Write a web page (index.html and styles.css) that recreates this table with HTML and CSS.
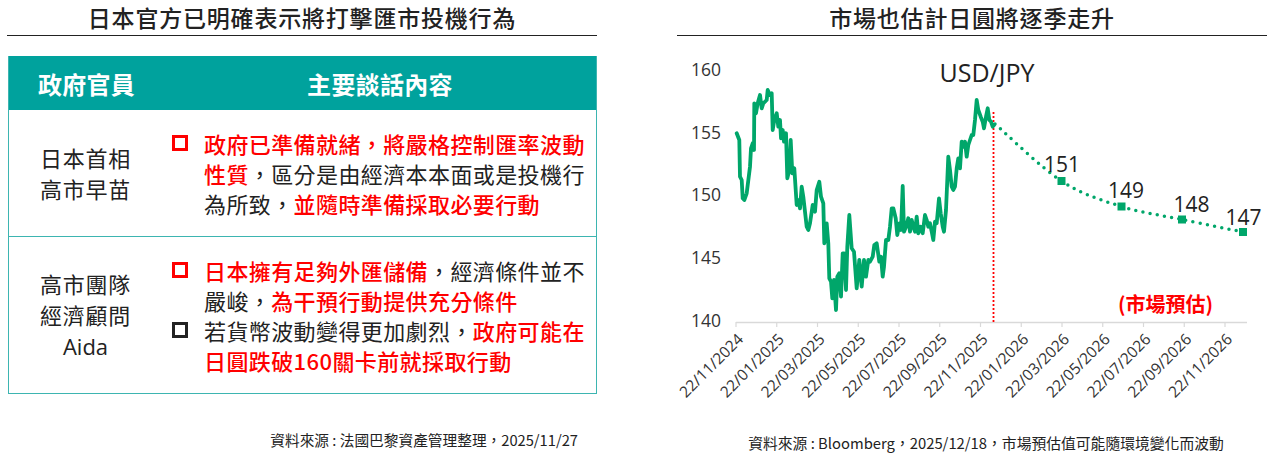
FILE: index.html
```html
<!DOCTYPE html>
<html lang="zh-Hant">
<head>
<meta charset="utf-8">
<title>日圓匯市</title>
<link rel="stylesheet" href="styles.css">
</head>
<body>
<div class="page">
  <section class="panel left">
    <h2 class="title">日本官方已明確表示將打擊匯市投機行為</h2>
    <div class="table">
      <div class="thead">
        <div class="th">政府官員</div>
        <div class="th">主要談話內容</div>
      </div>
      <div class="row">
        <div class="who">日本首相<br>高市早苗</div>
        <div class="points">
          <div class="pt"><span class="box red"></span><p><span class="hl">政府已準備就緒，將嚴格控制匯率波動<br>性質</span>，區分是由經濟本本面或是投機行<br>為所致，<span class="hl">並隨時準備採取必要行動</span></p></div>
        </div>
      </div>
      <div class="row">
        <div class="who">高市團隊<br>經濟顧問<br><span class="latin">Aida</span></div>
        <div class="points">
          <div class="pt"><span class="box red"></span><p><span class="hl">日本擁有足夠外匯儲備</span>，經濟條件並不<br>嚴峻，<span class="hl">為干預行動提供充分條件</span></p></div>
          <div class="pt"><span class="box"></span><p>若貨幣波動變得更加劇烈，<span class="hl">政府可能在<br>日圓跌破160關卡前就採取行動</span></p></div>
        </div>
      </div>
    </div>
    <p class="source src-left">資料來源 : 法國巴黎資產管理整理，2025/11/27</p>
  </section>

  <section class="panel right">
    <h2 class="title">市場也估計日圓將逐季走升</h2>
    <svg class="chart" width="590" height="390" viewBox="677 36 590 390" xmlns="http://www.w3.org/2000/svg">
      <g class="ylab">
        <text x="721" y="69">160</text>
        <text x="721" y="131.5">155</text>
        <text x="721" y="194">150</text>
        <text x="721" y="257">145</text>
        <text x="721" y="320">140</text>
      </g>
      <line x1="736" y1="322.5" x2="1247" y2="322.5" class="axis"/>
      <g class="ticks">
        <line x1="736" y1="322" x2="736" y2="327"/>
        <line x1="776.75" y1="322" x2="776.75" y2="327"/>
        <line x1="817.5" y1="322" x2="817.5" y2="327"/>
        <line x1="858.25" y1="322" x2="858.25" y2="327"/>
        <line x1="899" y1="322" x2="899" y2="327"/>
        <line x1="939.75" y1="322" x2="939.75" y2="327"/>
        <line x1="980.5" y1="322" x2="980.5" y2="327"/>
        <line x1="1021.25" y1="322" x2="1021.25" y2="327"/>
        <line x1="1062" y1="322" x2="1062" y2="327"/>
        <line x1="1102.75" y1="322" x2="1102.75" y2="327"/>
        <line x1="1143.5" y1="322" x2="1143.5" y2="327"/>
        <line x1="1184.25" y1="322" x2="1184.25" y2="327"/>
        <line x1="1225" y1="322" x2="1225" y2="327"/>
      </g>
      <g class="xlab">
        <text transform="translate(740 336) rotate(-45)">22/11/2024</text>
        <text transform="translate(780.75 336) rotate(-45)">22/01/2025</text>
        <text transform="translate(821.5 336) rotate(-45)">22/03/2025</text>
        <text transform="translate(862.25 336) rotate(-45)">22/05/2025</text>
        <text transform="translate(903 336) rotate(-45)">22/07/2025</text>
        <text transform="translate(943.75 336) rotate(-45)">22/09/2025</text>
        <text transform="translate(984.5 336) rotate(-45)">22/11/2025</text>
        <text transform="translate(1025.25 336) rotate(-45)">22/01/2026</text>
        <text transform="translate(1066 336) rotate(-45)">22/03/2026</text>
        <text transform="translate(1106.75 336) rotate(-45)">22/05/2026</text>
        <text transform="translate(1147.5 336) rotate(-45)">22/07/2026</text>
        <text transform="translate(1188.25 336) rotate(-45)">22/09/2026</text>
        <text transform="translate(1229 336) rotate(-45)">22/11/2026</text>
      </g>
      <text x="987" y="72" class="series">USD/JPY</text>
      <line x1="993.5" y1="112" x2="993.5" y2="322" class="now"/>
      <polyline class="hist" points="736.7,133.3 739.3,140 740,176.7 741.7,180 742.7,198.3 744.3,200 746.7,193.3 750,166.7 751,148.3 752.7,143.3 754,150 754.3,103.3 756,113.3 757.7,103.3 760,95 761.7,108.3 763.3,103.3 766.7,100 767.7,90 770,95 771.7,93.3 772.7,130 774.3,120 776.7,113.3 778.3,126.7 780,120 781,138.3 782.7,130 784,141.7 786,133.3 787.3,178.3 789.3,170 790.7,140 792.3,173.3 794.3,168.3 796.7,205 798.3,200 800,208.3 801.7,186.7 803.3,196.7 806.7,226.7 808.3,230 810,223.3 812.7,205 815,211.7 816.7,190 819.3,181.7 821,196.7 823.3,203.3 824.3,243.3 826.7,223.3 828.3,243.3 829.3,278.3 831,281.7 832.3,298.3 834,280 836,310 837.3,276.7 839.3,273.3 841,296.7 842.7,253.3 844.3,253.3 846,290 847.3,246.7 849.3,215 851.7,248.3 854,251.7 856.7,288.3 859.3,260 861.7,286.7 864,260 866,276.7 868.3,260 870,261.7 872.7,256.7 874.3,245 876.7,243.3 879.3,261.7 881,256.7 882.7,276.7 884,266.7 886,240 888.3,240 890,226.7 891.7,208.3 893.3,208.3 895.7,218.3 897.3,235 899.3,223.3 901,230 902.7,186 904,231.7 906.7,225 908.3,218.3 910,231.7 911.7,220 913.3,226.7 915,231.7 916.7,216.7 918.3,233.3 920.7,226.7 922.7,233.3 925,215 926.7,220 928.3,226.7 930,223.3 931.7,231.7 933.3,240 935,221.7 936.7,223.3 939,198.3 940.7,213.3 942.7,226.7 944,231.7 946,210 948.3,156.7 950,170 951.7,186.7 953.3,190 955,186.7 956.7,168.3 958.3,158.3 960,168.3 961.7,141.7 963.3,146.7 965,141.7 966.7,156.7 968.3,145 970,140 971.7,135 973.3,135 975,120 976.7,100 978.3,110 980.7,116.7 982.7,121.7 984,128.3 986,116.7 987.7,108.3 989.3,120 991,121.7 992.7,126.7 994,125"/>
      <path class="fcst" d="M995,124 C1006.1,133.5 1040.4,167.25 1061.5,181 C1082.6,194.75 1101.4,200.1 1121.5,206.5 C1141.6,212.9 1161.75,215.25 1182,219.5 C1202.25,223.75 1232.8,229.9 1243,232"/>
      <g class="mk">
        <rect x="1057.5" y="177" width="8" height="8"/>
        <rect x="1117.5" y="202.5" width="8" height="8"/>
        <rect x="1178" y="215.5" width="8" height="8"/>
        <rect x="1239" y="228" width="8" height="8"/>
      </g>
      <g class="vlab">
        <text x="1062" y="164">151</text>
        <text x="1126" y="189.5">149</text>
        <text x="1191.5" y="203.5">148</text>
        <text x="1243.5" y="216.5">147</text>
      </g>
      <text x="1165.5" y="303" class="est">(市場預估)</text>
    </svg>
    <p class="source src-right">資料來源 : Bloomberg，2025/12/18，市場預估值可能隨環境變化而波動</p>
  </section>
</div>
</body>
</html>
```

FILE: styles.css
```css
* { box-sizing: border-box; }

html, body {
  margin: 0;
  padding: 0;
  background: #ffffff;
}

body {
  font-family: "Open Sans", "Noto Sans CJK TC", sans-serif;
  color: #222222;
  width: 1275px;
  height: 456px;
  overflow: hidden;
}

.page {
  display: flex;
  gap: 80px;
  padding-left: 7px;
}

.panel {
  width: 590px;
  display: flex;
  flex-direction: column;
}

.title {
  margin: 0;
  height: 35.5px;
  line-height: 34px;
  font-size: 23px;
  font-weight: 500;
  letter-spacing: 0.8px;
  text-align: center;
  border-bottom: 1.5px solid #222222;
  font-family: "Noto Sans CJK TC", sans-serif;
}

/* table */
.table {
  margin-top: 20.5px;
  margin-left: 1px;
  border: 1.5px solid #3db5b1;
  border-top: none;
}

.thead {
  display: grid;
  grid-template-columns: 155px 1fr;
  background: #00a29d;
  height: 54px;
  align-items: center;
}

.th {
  color: #ffffff;
  font-size: 24px;
  font-weight: 700;
  text-align: center;
  font-family: "Noto Sans CJK TC", sans-serif;
  letter-spacing: 0.3px;
}

.row {
  display: grid;
  grid-template-columns: 155px 1fr;
  align-items: center;
  padding: 18px 0;
  border-top: 1.5px solid #3db5b1;
}

.thead + .row { border-top: none; }

.who {
  text-align: center;
  font-size: 22px;
  line-height: 31px;
  letter-spacing: 0.8px;
  padding-right: 2px;
  font-family: "Noto Sans CJK TC", sans-serif;
}

.latin {
  font-family: "Open Sans", sans-serif;
  letter-spacing: 0;
}

.points {
  padding-left: 8px;
  display: flex;
  flex-direction: column;
}

.pt {
  display: flex;
  align-items: flex-start;
  gap: 16px;
}

.pt p {
  margin: 0;
  font-size: 22px;
  line-height: 30px;
  letter-spacing: 0.4px;
  white-space: nowrap;
  color: #222222;
  font-family: "Noto Sans CJK TC", sans-serif;
}

.hl {
  color: #ff0000;
  font-weight: 500;
}

.box {
  flex: none;
  width: 16px;
  height: 16px;
  margin-top: 7px;
  border: 3.5px solid #222222;
  background: #ffffff;
}

.box.red { border-color: #ff0000; }

.source {
  margin: 0;
  font-size: 14.7px;
  line-height: 20px;
  color: #222222;
  font-family: "Noto Sans CJK TC", sans-serif;
}

.src-left {
  margin-top: 36px;
  text-align: right;
  padding-right: 19px;
}

.src-right {
  margin-top: 7.5px;
  text-align: center;
  padding-left: 28px;
  font-size: 14.8px;
}

/* chart */
.chart {
  display: block;
  overflow: visible;
  font-family: "Open Sans", sans-serif;
}

.ylab text {
  font-size: 17.5px;
  fill: #333333;
  text-anchor: end;
  dominant-baseline: central;
}

.axis {
  stroke: #d9d9d9;
  stroke-width: 1.5;
}

.ticks line {
  stroke: #d9d9d9;
  stroke-width: 1.2;
}

.xlab text {
  font-size: 15.5px;
  fill: #333333;
  text-anchor: end;
  dominant-baseline: central;
}

.series {
  font-size: 25px;
  fill: #222222;
  text-anchor: middle;
  dominant-baseline: central;
}

.now {
  stroke: #ff0000;
  stroke-width: 1.8;
  stroke-dasharray: 2 2;
}

.hist {
  fill: none;
  stroke: #00a66a;
  stroke-width: 3.8;
  stroke-linejoin: round;
  stroke-linecap: round;
}

.fcst {
  fill: none;
  stroke: #00a66a;
  stroke-width: 3.5;
  stroke-linecap: round;
  stroke-dasharray: 0 7.3;
}

.mk rect { fill: #00a66a; }

.vlab text {
  font-size: 21px;
  fill: #222222;
  text-anchor: middle;
  dominant-baseline: central;
}

.est {
  font-size: 20px;
  font-weight: 700;
  fill: #ff0000;
  text-anchor: middle;
  dominant-baseline: central;
  font-family: "Noto Sans CJK TC", sans-serif;
}
```
